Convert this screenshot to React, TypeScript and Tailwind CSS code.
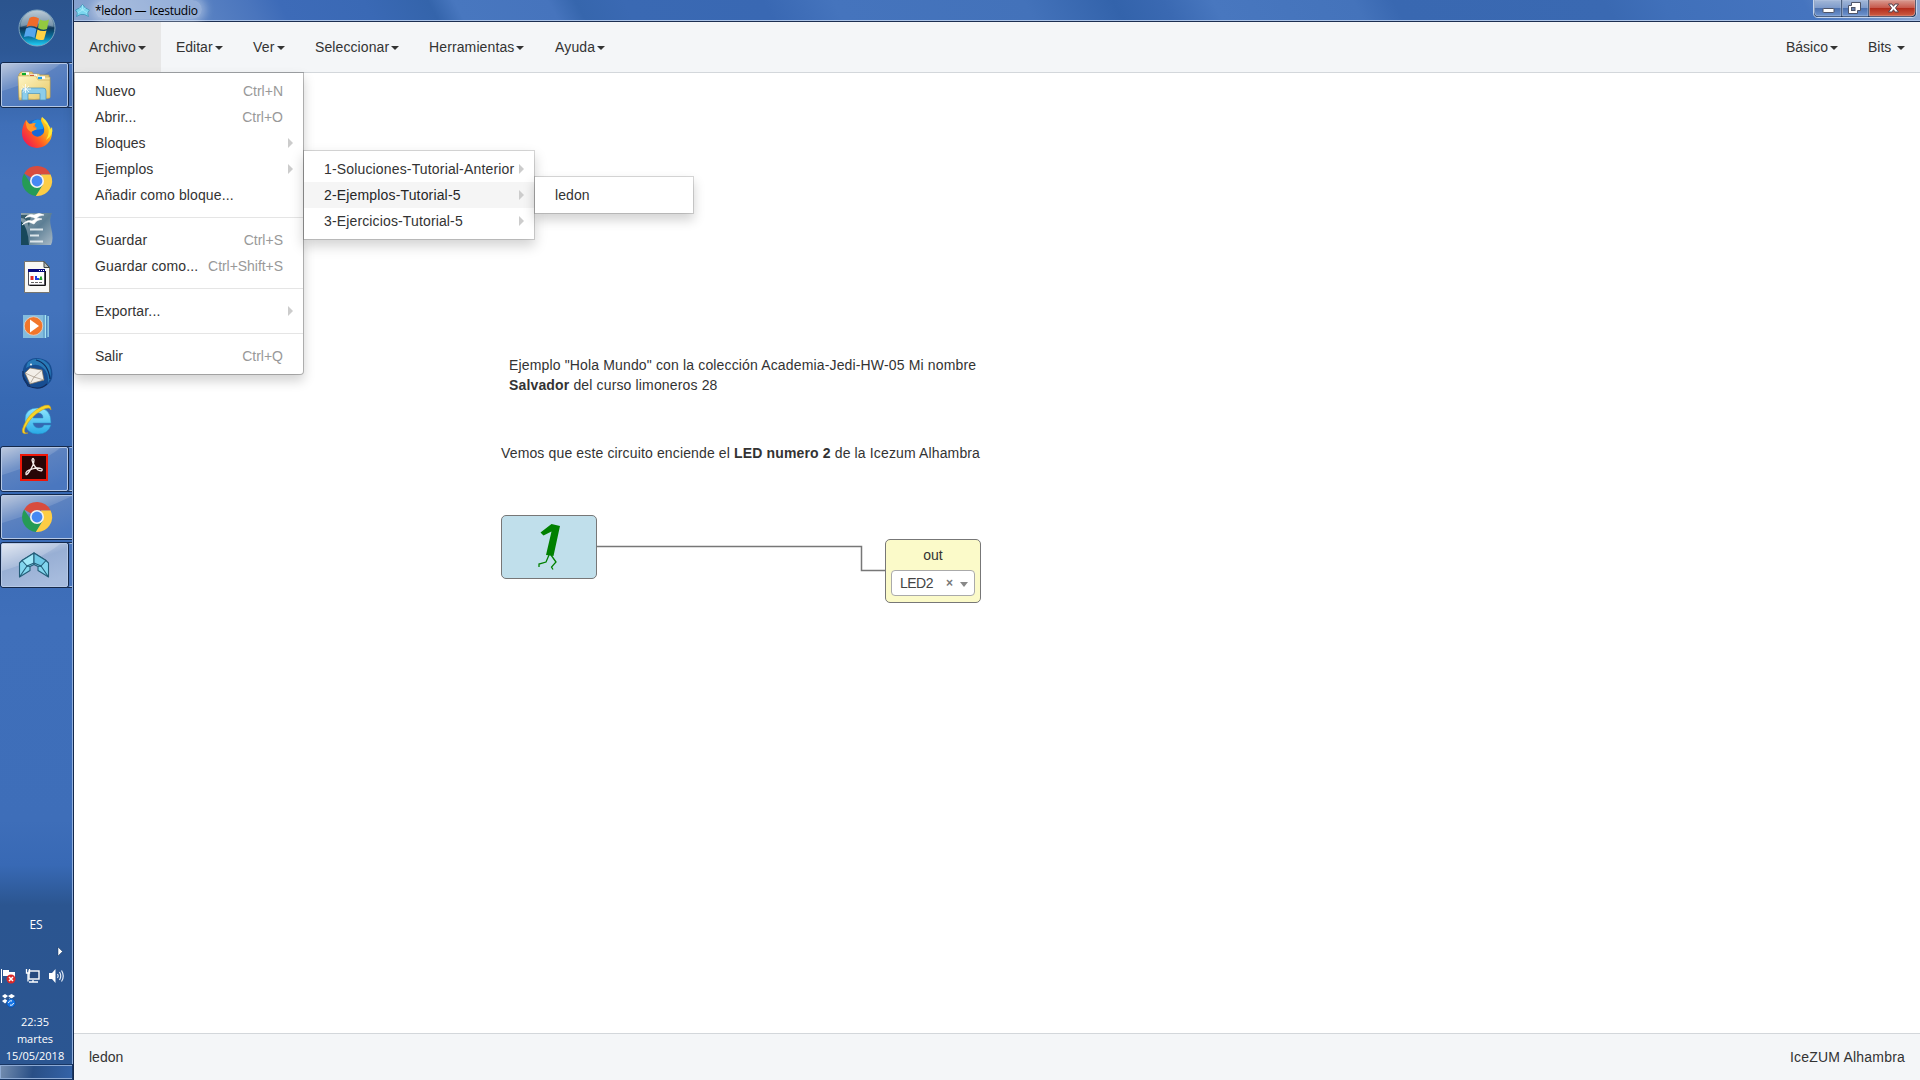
import React from 'react';

const Caret = ({ className = '' }: { className?: string }) => (
  <span className={`inline-block h-0 w-0 border-x-4 border-t-4 border-x-transparent border-t-[#333] align-middle ${className}`} />
);

const NavItem = ({ label, width, active = false, space = false, className = '' }: { label: string; width: string; active?: boolean; space?: boolean; className?: string }) => (
  <div className={`flex h-[50px] shrink-0 items-center whitespace-pre pl-[15px] ${width} ${className} ${active ? 'bg-[#e7e7e7]' : ''}`}>
    <span>{label}</span>
    <Caret className={space ? 'ml-[6px] mt-[2px]' : 'ml-[2px] mt-[2px]'} />
  </div>
);

const MenuItem = ({ label, hint, sub = false, active = false, className = '' }: { label: string; hint?: string; sub?: boolean; active?: boolean; className?: string }) => (
  <div className={`flex h-[26px] items-center justify-between whitespace-nowrap pl-5 ${sub ? 'pr-[10px]' : 'pr-5'} ${active ? 'bg-[#f5f5f5] text-[#262626]' : ''}`}>
    <span className={className}>{label}</span>
    {hint && <span className={`text-[#999] ${hint.length > 8 ? 'tracking-[-0.05px]' : ''}`}>{hint}</span>}
    {sub && <span className="h-0 w-0 border-y-[5px] border-l-[5px] border-y-transparent border-l-[#ccc]" />}
  </div>
);

const Divider = () => <div className="my-[9px] h-px bg-[#e5e5e5]" />;

const Slot = ({ y, h = 48, children }: { y: number; h?: number; children: React.ReactNode }) => (
  <svg className="block shrink-0" width="72" height={h} viewBox={`0 ${y} 72 ${h}`}>
    {children}
  </svg>
);

const TaskButton = ({ y, h, grouped, bright, children }: { y: number; h: number; grouped?: boolean; bright?: boolean; children: React.ReactNode }) => (
  <Slot y={y} h={h}>
    {grouped && <rect x="60.5" y={y + 0.5} width="16" height={h - 1} rx="2" fill="#4673bb" stroke="#172c50" />}
    {grouped && <path d={`M69.5 ${y + 1.5}H72M69.5 ${y + h - 1.5}H72`} stroke="#a7bfe2" />}
    <rect x="0.5" y={y + 0.5} width={grouped ? 68 : 76} height={h - 1} rx="2.5" fill="#3d6db9" stroke="#142849" />
    <rect x="1.5" y={y + 1.5} width={grouped ? 66 : 76} height={h - 3} rx="1.5" fill={bright ? 'url(#btnBright)' : 'url(#btn)'} stroke="#b5c8e6" />
    <path d={`M2 ${y + 2}H${grouped ? 60 : 72}Q42 ${y + 17} 2 ${y + 29}Z`} fill="#fff" opacity={bright ? 0.18 : 0.13} />
    {children}
  </Slot>
);

const Chrome = ({ cy }: { cy: number }) => (
  <g transform={`translate(37 ${cy})`}>
    <path d="M0 0L-12.9 -7.5A15 15 0 0 1 13.6 -6.4L0 -6.4Z" fill="#d84c3f" />
    <path d="M-12.9 -7.5A15 15 0 0 0 -1 15L6 3.4L-5.5 3.4Z" fill="#259b56" />
    <path d="M13.6 -6.5A15 15 0 0 1 -1.2 15L6 3.4L4 -6.5Z" fill="#fdcd45" />
    <circle r="7" fill="#f4f4f4" />
    <circle r="5.4" fill="#4688f3" />
  </g>
);

const Defs = () => (
  <svg width="0" height="0" className="absolute">
    <defs>
      <linearGradient id="btn" x1="0" y1="0" x2="0.6" y2="1">
        <stop offset="0" stopColor="#b3c1d9" />
        <stop offset="0.45" stopColor="#5c82c0" />
        <stop offset="1" stopColor="#4a77bf" />
      </linearGradient>
      <linearGradient id="btnBright" x1="0" y1="0" x2="0.5" y2="1">
        <stop offset="0" stopColor="#dde4ef" />
        <stop offset="0.5" stopColor="#98afd4" />
        <stop offset="1" stopColor="#a6bbdd" />
      </linearGradient>
      <linearGradient id="orb" x1="0" y1="0" x2="0" y2="1">
        <stop offset="0" stopColor="#a9bccb" />
        <stop offset="0.42" stopColor="#4d7391" />
        <stop offset="0.5" stopColor="#0e3557" />
        <stop offset="0.75" stopColor="#08729f" />
        <stop offset="1" stopColor="#23d4fb" />
      </linearGradient>
      <linearGradient id="folder" x1="0" y1="0" x2="1" y2="1">
        <stop offset="0" stopColor="#fff6c5" />
        <stop offset="1" stopColor="#e7c866" />
      </linearGradient>
      <linearGradient id="fox" x1="1" y1="0" x2="0" y2="0.8">
        <stop offset="0" stopColor="#fff13a" />
        <stop offset="0.35" stopColor="#ffae17" />
        <stop offset="0.65" stopColor="#ff5724" />
        <stop offset="1" stopColor="#ee1457" />
      </linearGradient>
      <linearGradient id="office" x1="0" y1="0" x2="1" y2="1">
        <stop offset="0" stopColor="#8fa4ae" />
        <stop offset="0.5" stopColor="#5c7e94" />
        <stop offset="1" stopColor="#a9bac7" />
      </linearGradient>
      <linearGradient id="ie" x1="0" y1="0" x2="0" y2="1">
        <stop offset="0" stopColor="#8fe6ff" />
        <stop offset="1" stopColor="#28a9e6" />
      </linearGradient>
    </defs>
  </svg>
);

const IceBird = () => (
  <g stroke="#235d78" strokeWidth="1.1" strokeLinejoin="round">
    <path d="M34 553L22 560.500L19.500 563V577L30 570.500V566.500L34 564.500L38 566.500V570.500L48.500 577V563L46 560.500Z" fill="#83d6ee" />
    <path d="M34 553L22 560.500L27 566L34 563Z" fill="#a0e8f8" />
    <path d="M34 553L46 560.500L41 566L34 563Z" fill="#6fc9e6" />
    <path d="M27 566L19.500 577M41 566L48.500 577M27 566L30 566.500M41 566L38 566.500M34 563V564.500" fill="none" />
  </g>
);

const IceStar = () => (
  <g fill="#7ad5ee" stroke="#3a92b6" strokeWidth="0.8" strokeLinejoin="round">
    <path d="M7.500 0.500L10.500 4L14.500 6L12.500 9L13.500 12.500L9.500 10.500H5.500L1.500 12.500L2.500 9L0.500 6L4.500 4Z" />
    <path d="M7.500 1V6L2.500 9M7.500 6L12.500 9M4.500 4L7.500 6L10.500 4" fill="none" stroke="#a9ecfa" />
  </g>
);

const Sidebar = () => (
  <aside className="flex h-[1080px] w-[74px] shrink-0 flex-col border-r border-[#14284a] bg-[linear-gradient(180deg,#2b548e_0,#2d5896_52px,#3f6fb8_125px,#4474bc_180px,#4373bc_310px,#3769b3_400px,#3566b0_445px,#3f6fba_620px,#3e6eb9_820px,#3869b5_865px,#2b5590_905px,#2b5692_1080px)]">
    <div className="flex h-full flex-col border-r border-[#92b0dc]">
      <Slot y={0} h={62}>
        <circle cx="37" cy="28" r="18" fill="url(#orb)" stroke="#7ea4bf" strokeWidth="1" />
        <path d="M20.500 27A16.500 16.500 0 0 1 53.500 27Q37 20 20.500 27Z" fill="#fff" opacity="0.25" />
        <path d="M29.500 18Q34 15.500 39 18.500L37 27.500Q32 24.500 26.500 27Z" fill="#ef6b2b" />
        <path d="M40 19.500Q44.500 22 49 19.500L47 29Q42.500 31 38 28Z" fill="#93c93f" />
        <path d="M26 28.500Q31 26 36.500 29L34.500 38Q29.500 35 24 37Z" fill="#55a6ee" />
        <path d="M37.500 29.500Q42 32 46.500 30.500L44 39.500Q40 41 35.500 38.500Z" fill="#ffd346" />
      </Slot>
      <TaskButton y={62} h={46} grouped>
        <path d="M19 74L21 72H32L34 75H49V98L19 100Z" fill="#ecd58a" stroke="#b99a46" strokeWidth="0.7" />
        <path d="M28 74H39L41 77H50V97H28Z" fill="#f4e3a0" stroke="#c5a755" strokeWidth="0.6" />
        <path d="M22 73.500H29M30 75.500H37M38 77.500H45" stroke="#fff" strokeWidth="2.600" />
        <path d="M22 74H26" stroke="#0cab27" strokeWidth="2.300" />
        <path d="M30 76H34" stroke="#d34732" strokeWidth="2.300" />
        <path d="M38 78H42" stroke="#1e9fe6" strokeWidth="2.300" />
        <path d="M18 76H36L38 80H50V98Q34 101 19 98Z" fill="url(#folder)" stroke="#bc9d49" strokeWidth="0.5" />
        <path d="M22 100V91Q22 88 25 88H43Q46 88 46 91V100H40V93.500H28V100Z" fill="#8ccdea" stroke="#4b94bb" strokeWidth="0.7" />
        <path d="M25.500 84V93M21 89H31M22.500 86L29 92M29 86L22.500 92" stroke="#fff" strokeWidth="0.8" />
      </TaskButton>
      <Slot y={108}>
        <circle cx="37" cy="132" r="12.500" fill="#1768d5" />
        <path d="M32 122Q37 117 45 122L43 129L35 130Z" fill="#1b9aef" />
        <path d="M26 120Q28 124 31 124L36 123Q33 126 37 128L32 131Q31 134 35 136Q39 138 43 134Q46 130 42 123Q40 120 42 117Q46 123 50 127Q52 131 52 133A15 15 0 0 1 22 133Q22 126 26 120Z" fill="url(#fox)" />
        <path d="M42 117Q42 121 47 125Q51 132 46 140Q54 135 52 127L50 130Q49 122 42 117Z" fill="#ffe936" />
        <path d="M26 120L29 124L35 123L33 127L37 129L31 132Q25 129 26 120Z" fill="#ff982b" />
      </Slot>
      <Slot y={156}><Chrome cy={181} /></Slot>
      <Slot y={204}>
        <path d="M21 213H52Q49 219 51 227Q54 239 51 245H21Z" fill="url(#office)" />
        <path d="M21 221Q28 227 29 245H21Z" fill="#18485c" />
        <path d="M29 227Q27 218 21 218V215H31Z" fill="#375d6d" />
        <path d="M22 225Q27 219 32 221Q37 217 42 219Q36 220 34 224L29 222Q26 222 22 225ZM25 218Q29 213 34 215Q39 212 44 215Q39 215 36 219Q31 215 25 218Z" fill="#fff" stroke="#fff" strokeWidth="0.6" />
        <path d="M30 229.500H43M30 235.500H39M30 241.500H43" stroke="#dce5ea" strokeWidth="2.200" />
      </Slot>
      <Slot y={252}>
        <path d="M24.500 261.500H44L49.500 267.500V292.500H24.500Z" fill="#f8f8f5" stroke="#77756e" />
        <path d="M44 261.500V267.500H49.500Z" fill="#bcbeb9" stroke="#3e4544" />
        <rect x="28.500" y="269.500" width="16" height="15.500" fill="#fff" stroke="#4c4c57" />
        <rect x="28" y="269" width="17" height="3" fill="#07087c" />
        <path d="M45.500 271V285.500H29.500" fill="none" stroke="#141414" />
        <path d="M39 270.500H44" stroke="#fff" strokeDasharray="1 1" />
        <rect x="30.500" y="276" width="3" height="4" fill="#e12b26" />
        <path d="M35 276H37V278H39V280H35Z" fill="#203ce1" />
        <path d="M39.500 279.500L41 276.500L42 279.500Z" fill="#20a129" stroke="#20a129" />
        <path d="M31 282.500H43" stroke="#666" strokeDasharray="3 1" />
      </Slot>
      <Slot y={300}>
        <path d="M23 315H45V338H23Z" fill="#83bcde" />
        <path d="M45.500 315V338M48 316V337" stroke="#a9e5f5" strokeWidth="1.400" />
        <path d="M44 315V338M47 315V338" stroke="#4188b7" strokeWidth="0.7" />
        <circle cx="33.500" cy="326" r="9.300" fill="#f1762b" stroke="#dfd6d0" strokeWidth="0.8" />
        <path d="M30 319.500L39 326L30 332.500Z" fill="#fff" />
      </Slot>
      <Slot y={348}>
        <path d="M24 366Q29 357 38 358Q48 359 51 366Q54 375 51 381Q45 389 35 388Q25 385 23 378Q22 371 24 366Z" fill="#174d91" />
        <path d="M28 362Q40 354 49 365Q53 374 48 383Q49 372 42 367Q35 362 26 368Q27 364 28 362Z" fill="#2879b7" />
        <path d="M36 360Q48 363 50 379M24 378L28 386Q40 391 47 384" fill="none" stroke="#112c5e" strokeWidth="1.200" />
        <path d="M25 373L30 368L42 370L44 380L30 384Z" fill="#f2eee8" stroke="#84735f" strokeWidth="0.7" />
        <path d="M25 373L34 377L42 370M30 384L34 377L44 380" fill="none" stroke="#aa9e90" strokeWidth="0.8" />
        <path d="M23 371Q22 380 30 386" fill="none" stroke="#123469" strokeWidth="1.500" />
        <circle cx="31" cy="364.500" r="0.9" fill="#fff" />
      </Slot>
      <Slot y={396} h={50}>
        <path fillRule="evenodd" d="M25 420Q25 408 38 408Q51 408 51 423H33Q34 428 39 428Q43 428 44 425H51Q48 434 38 434Q25 434 25 420ZM33 418H43Q43 413 38 413Q33 413 33 418Z" fill="url(#ie)" stroke="#248ec5" strokeWidth="0.5" />
        <path d="M28 433Q19 436 24 425Q29 413 41 407Q51 402 51 410Q50 406 42 410Q30 417 25 428Q23 434 28 433Z" fill="#f6d527" stroke="#d19d16" strokeWidth="0.6" />
      </Slot>
      <TaskButton y={446} h={46} grouped>
        <rect x="21" y="455" width="26" height="25" fill="#270506" stroke="#ee1709" strokeWidth="2" />
        <path d="M26 474Q25 471 32 469Q38 467 42 469Q43 472 38 470Q33 465 32 460Q33 457 34 460Q34 465 29 472Q26 476 26 474Z" fill="none" stroke="#f3e9e8" strokeWidth="1.300" />
      </TaskButton>
      <div className="h-[2px] shrink-0" />
      <TaskButton y={494} h={46}><Chrome cy={517} /></TaskButton>
      <div className="h-[2px] shrink-0" />
      <TaskButton y={542} h={46} grouped bright><IceBird /></TaskButton>
      <div className="flex-1" />
      <div className="flex h-[148px] shrink-0 flex-col text-white">
        <div className="h-4 text-center text-[12px] leading-4 font-['Open_Sans',sans-serif]">ES</div>
        <svg className="block shrink-0" width="72" height="80" viewBox="0 933 72 80">
          <path d="M58 947L62.500 951.500L58 956Z" fill="#fff" stroke="#18365f" strokeWidth="0.5" />
          <path d="M1.500 969V983" stroke="#fff" />
          <path d="M3 970H9V972H15V978H9V976H3Z" fill="#fff" />
          <circle cx="11" cy="979" r="4.500" fill="#da2929" />
          <path d="M9 977L13 981M13 977L9 981" stroke="#fff" strokeWidth="1.500" />
          <rect x="29" y="971" width="10" height="8" fill="#254a7e" stroke="#fff" strokeWidth="1.400" />
          <path d="M26.500 969V973H29.500V969M28 973V981.500M33 980V982H29H38" fill="none" stroke="#fff" strokeWidth="1.300" />
          <path d="M49 973H52L55.500 969V983L52 979H49Z" fill="#fff" />
          <path d="M57.500 974Q59 976 57.500 978M59.500 972Q62 976 59.500 980M61.500 970.500Q65 976 61.500 981.500" fill="none" stroke="#e5edf8" strokeWidth="1.200" />
          <path d="M5 994L8 996L5 998.500L2 996ZM11.500 994L15 996L11.500 998.500L8 996ZM5 999L8 1001L5 1003.500L2 1001ZM9 998L12 1000L9 1003Z" fill="#fff" />
          <circle cx="11" cy="1003" r="4.300" fill="#1474e7" stroke="#0c4a9b" strokeWidth="0.6" />
          <path d="M8.500 1003A2.500 2.500 0 0 1 12 1001M13.500 1003A2.500 2.500 0 0 1 10 1005" fill="none" stroke="#fff" strokeWidth="1" />
        </svg>
        <div className="flex flex-col pr-[2px] text-center text-[11px] leading-[17px] font-['Open_Sans',sans-serif]">
          <span>22:35</span><span>martes</span><span>15/05/2018</span>
        </div>
      </div>
      <div className="mb-px h-[14px] shrink-0 border border-r-0 border-[#8daad4] bg-[linear-gradient(100deg,#728caf,#294f86_45%,#3463a8)] outline outline-1 outline-[#183765]" />
    </div>
  </aside>
);

const TitleBar = () => (
  <header className="flex h-[22px] shrink-0 justify-between border-b border-[#1c2f52] bg-[linear-gradient(62deg,#8aa4cf_0,#6289c6_88px,#4a75bd_163px,#3d6bb8_190px,#3a69b5_265px,#3464ab_322px,#4877bf_345px,#4674bd_428px,#3666ad_452px,#3a69b3_495px,#3968b3_618px,#4574bd_680px,#4372ba_848px,#3363ab_927px,#3a69b2_971px,#4877bf_1015px,#4473bb_1139px,#3968b1_1174px,#3a69b2_1360px,#4070ba_1413px,#4574bf_1536px,#8aa6d2_1630px)]">
    <div className="flex h-[21px] flex-1 border-b border-[#aac2e6]">
      <svg className="mt-[4px] ml-[1px] shrink-0" width="15" height="13" viewBox="0 0 15 13"><IceStar /></svg>
      <div className="ml-[5px] h-[19px] whitespace-nowrap rounded-full bg-white/35 pr-1 text-[12px] leading-[21px] tracking-[-0.26px] text-black shadow-[0_0_8px_4px_rgba(255,255,255,0.35)] font-['Open_Sans',sans-serif]">*ledon — Icestudio</div>
    </div>
    <div className="flex h-[21px] border-b border-[#aac2e6] pr-[3px]">
      <svg className="block" width="104" height="19" viewBox="0 0 104 19">
        <defs>
          <linearGradient id="ctl" x1="0" y1="0" x2="0" y2="1"><stop offset="0" stopColor="#a3b8d8" /><stop offset="0.5" stopColor="#7d9aca" /><stop offset="0.51" stopColor="#4b70ad" /><stop offset="1" stopColor="#6e94cf" /></linearGradient>
          <linearGradient id="cls" x1="0" y1="0" x2="0" y2="1"><stop offset="0" stopColor="#d99b91" /><stop offset="0.48" stopColor="#c7594c" /><stop offset="0.5" stopColor="#b22a1a" /><stop offset="1" stopColor="#cd5d43" /></linearGradient>
        </defs>
        <path d="M0.500 0V13Q0.500 17.500 5 17.500H99Q103.500 17.500 103.500 13V0" fill="#1f3558" stroke="#c5d5ed" strokeWidth="1" />
        <path d="M1.500 0V12Q1.500 16 5 16H28V0Z" fill="url(#ctl)" stroke="#bdcde6" strokeWidth="0.6" />
        <path d="M29.500 0V16H55V0Z" fill="url(#ctl)" stroke="#bdcde6" strokeWidth="0.6" />
        <path d="M56.500 0V16H98Q102 16 102 12V0Z" fill="url(#cls)" stroke="#e8b7af" strokeWidth="0.6" />
        <rect x="10" y="8.500" width="11" height="4" rx="0.5" fill="#fff" stroke="#4e5569" />
        <path d="M38.500 2.500H47.500V10.500H44.500V13.500H35.500V5.500H38.500Z" fill="#fff" stroke="#4e5569" />
        <rect x="38.500" y="7.500" width="3.500" height="3" fill="#6b83b0" stroke="#4e5569" />
        <path d="M75.500 4H79L80.500 6.300L82 4H85.500L82.500 8L85.500 12H82L80.500 9.700L79 12H75.500L78.500 8Z" fill="#fff" stroke="#55404a" strokeWidth="1" />
      </svg>
    </div>
  </header>
);

const Canvas = () => (
  <main className="relative flex-1 bg-white">
    <div className="absolute left-[435px] top-[282px] whitespace-nowrap leading-5 tracking-[0.15px]">
      Ejemplo "Hola Mundo" con la colección Academia-Jedi-HW-05 Mi nombre<br />
      <b>Salvador</b> del curso limoneros 28
    </div>
    <div className="absolute left-[427px] top-[370px] whitespace-nowrap leading-5 tracking-[0.14px]">
      Vemos que este circuito enciende el <b>LED numero 2</b> de la Icezum Alhambra
    </div>
    <svg className="absolute left-[522px] top-[466px]" width="290" height="40" viewBox="596 539 290 40">
      <path d="M597 546.500H861.500V570.500H886" fill="none" stroke="#777" strokeWidth="1.500" />
    </svg>
    <div className="absolute left-[427px] top-[442px] h-16 w-24 rounded-[5px] border border-[#777] bg-[#c0dfeb]">
      <svg width="94" height="62" viewBox="502 516 94 62">
        <path d="M540.500 532.500L551.500 524L560 526L553.500 556L546 555L551.500 531.500L543.500 535.500Z" fill="green" />
        <path d="M549 555L546 562L539 564L539 567M551 555L556 562L551.500 567L553 569.500" fill="none" stroke="green" strokeWidth="1.300" />
      </svg>
    </div>
    <div className="absolute left-[811px] top-[466px] flex h-16 w-24 flex-col rounded-[5px] border border-[#777] bg-[#fbfac9] px-[5px] text-center">
      <div className="h-[30px] leading-[31px]">out</div>
      <div className="flex h-[26px] items-center rounded-[4px] border border-[#aaa] bg-white pl-2 text-left text-[#444]">
        <span className="w-[46px] leading-[23px] tracking-[-0.5px]">LED2</span>
        <b className="w-[14px] text-[12px] leading-[24px] text-[#777]">×</b>
        <span className="mt-[3px] h-0 w-0 border-x-4 border-t-[5px] border-x-transparent border-t-[#888]" />
      </div>
    </div>
  </main>
);

const MenuPanel = ({ className, children }: { className: string; children: React.ReactNode }) => (
  <div className={`absolute border border-black/15 bg-white bg-clip-padding py-[5px] shadow-[0_6px_12px_rgba(0,0,0,0.175)] ${className}`}>{children}</div>
);

export default function App() {
  return (
    <div className="relative flex h-[1080px] w-[1920px] overflow-hidden bg-white text-[14px] leading-5 text-[#333] font-['Liberation_Sans',Arial,sans-serif]">
      <Defs />
      <Sidebar />
      <div className="flex min-w-0 flex-1 flex-col">
        <TitleBar />
        <nav className="flex h-[51px] shrink-0 border-b border-[#d3d7db] bg-[#f4f6f8]">
          <NavItem label="Archivo" width="w-[87px]" active />
          <NavItem label="Editar" width="w-[77px]" />
          <NavItem label="Ver" width="w-[62px]" className="tracking-[0.2px]" />
          <NavItem label="Seleccionar" width="w-[114px]" className="tracking-[0.1px]" />
          <NavItem label="Herramientas" width="w-[126px]" className="tracking-[0.12px]" />
          <NavItem label="Ayuda" width="w-[80px]" className="tracking-[0.15px]" />
          <div className="flex-1" />
          <NavItem label="Básico" width="w-[82px]" />
          <NavItem label="Bits" width="w-[67px]" space />
        </nav>
        <Canvas />
        <footer className="flex h-[47px] shrink-0 items-center justify-between border-t border-[#d3d7db] bg-[#f4f6f8] px-[15px]">
          <span>ledon</span>
          <span className="tracking-[0.2px]">IceZUM Alhambra</span>
        </footer>
      </div>

      <MenuPanel className="left-[74px] top-[72px] w-[230px] rounded-b-[4px] border-black/25">
        <MenuItem label="Nuevo" hint="Ctrl+N" />
        <MenuItem label="Abrir..." hint="Ctrl+O" className="tracking-[0.12px]" />
        <MenuItem label="Bloques" sub />
        <MenuItem label="Ejemplos" sub className="tracking-[0.1px]" />
        <MenuItem label="Añadir como bloque..." className="tracking-[0.12px]" />
        <Divider />
        <MenuItem label="Guardar" hint="Ctrl+S" className="tracking-[0.12px]" />
        <MenuItem label="Guardar como..." hint="Ctrl+Shift+S" className="tracking-[0.15px]" />
        <Divider />
        <MenuItem label="Exportar..." sub className="tracking-[0.15px]" />
        <Divider />
        <MenuItem label="Salir" hint="Ctrl+Q" />
      </MenuPanel>
      <MenuPanel className="left-[303px] top-[150px] w-[232px]">
        <MenuItem label="1-Soluciones-Tutorial-Anterior" sub className="tracking-[0.16px]" />
        <MenuItem label="2-Ejemplos-Tutorial-5" sub active className="tracking-[0.16px]" />
        <MenuItem label="3-Ejercicios-Tutorial-5" sub className="tracking-[0.14px]" />
      </MenuPanel>
      <MenuPanel className="left-[534px] top-[176px] w-[160px]">
        <MenuItem label="ledon" className="tracking-[0.1px]" />
      </MenuPanel>
    </div>
  );
}
